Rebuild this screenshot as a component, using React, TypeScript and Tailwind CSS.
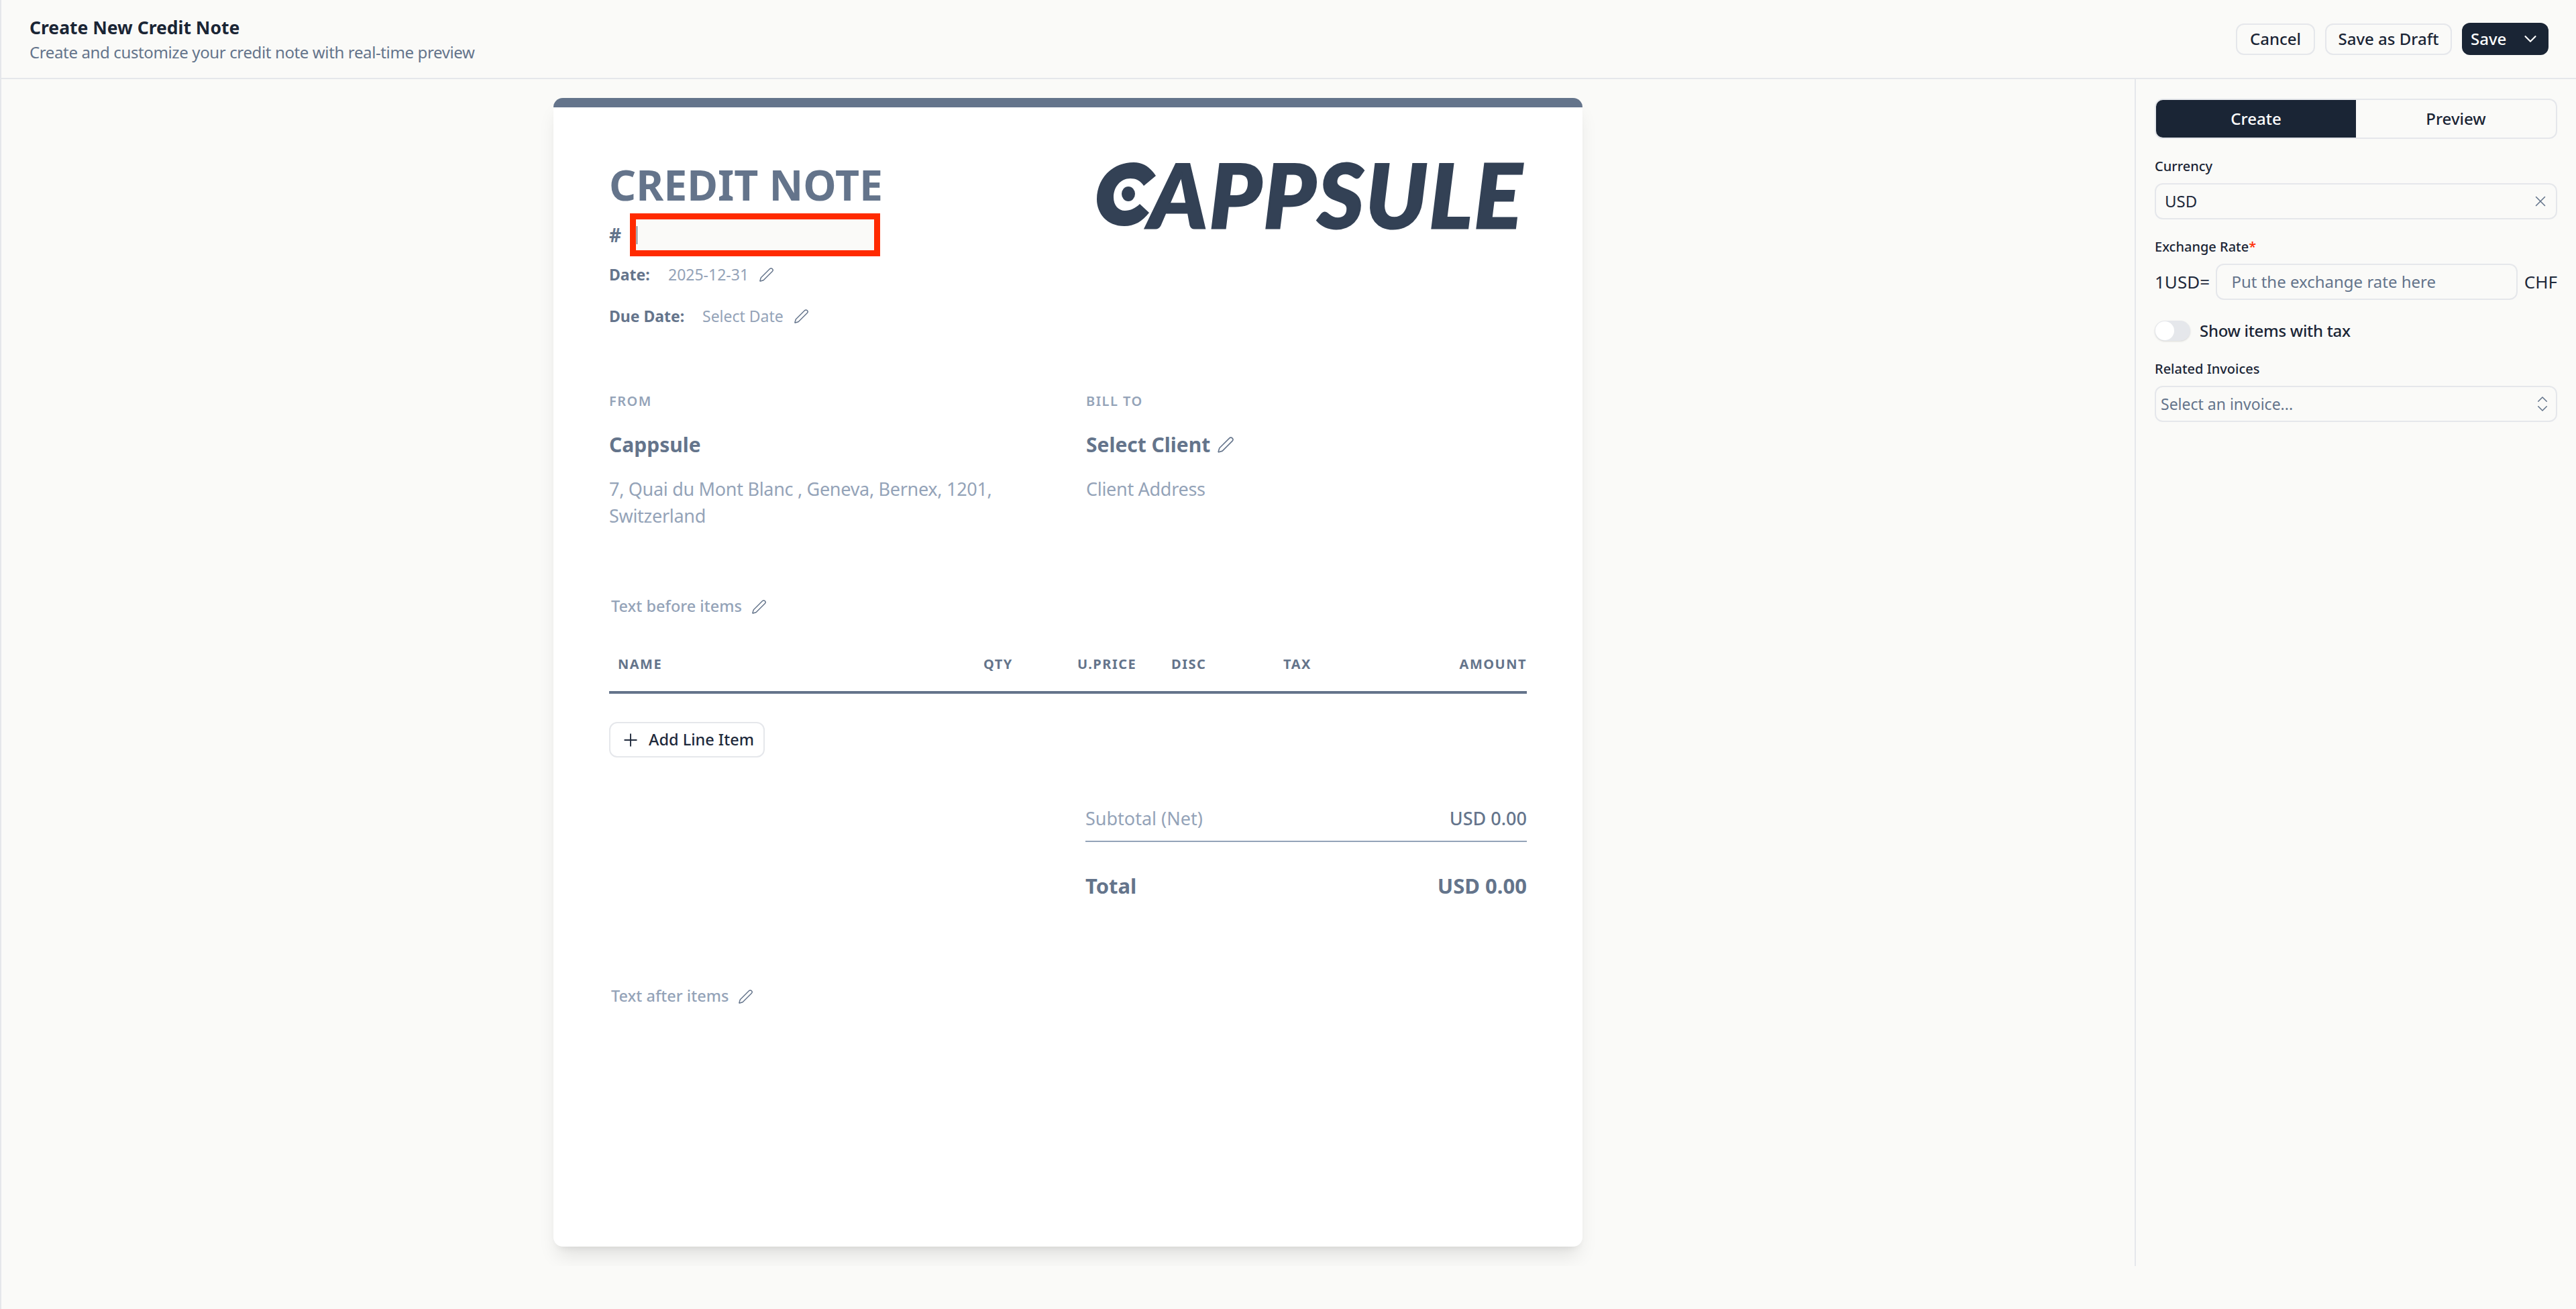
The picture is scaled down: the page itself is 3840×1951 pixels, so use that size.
import { ChevronDown, ChevronsUpDown, Pen, Plus, X } from 'lucide-react'

const font = { fontFamily: '"Noto Sans", "Open Sans", sans-serif' }

function EditIcon({ className = 'w-[23px] h-[23px]' }: { className?: string }) {
  return <Pen className={`text-[#64748b] shrink-0 ${className}`} strokeWidth={1.5} />
}

function CappsuleLogo() {
  return (
    <div className="flex items-center w-[641px] h-[95px] text-[#334155]">
      <svg viewBox="0 0 88 95" className="w-[88px] h-[95px] shrink-0" fill="currentColor">
        <path d="M55 0C70 0 80 8 88 20L70 35C65 27 58 24 50 24C35 24 25 37 25 52C25 64 32 72 42 72C50 72 58 68 64 62L78 75C68 88 56 95 41 95C15 95 0 76 0 55C0 25 22 0 55 0Z" />
        <ellipse cx="47" cy="47" rx="10" ry="11" />
      </svg>
      <span
        className="-ml-[10px] italic font-black text-[132px] leading-[95px] tracking-[3px] whitespace-nowrap [-webkit-text-stroke:3px_#334155]"
        style={{ fontFamily: 'Lato, sans-serif' }}
      >
        APPSULE
      </span>
    </div>
  )
}

function Invoice() {
  return (
    <div className="w-[1534px] h-[1712px] shrink-0 bg-white rounded-[14px] border-t-[14px] border-[#64748b] shadow-[0_19px_29px_-6px_rgba(0,0,0,0.1),0_8px_12px_-8px_rgba(0,0,0,0.1)] px-[83px]">
      <div className="flex justify-between pt-[83px]">
        <div>
          <h1 className="text-[62.5px] leading-[64px] font-bold text-[#64748b]">CREDIT NOTE</h1>
          <div className="flex items-center mt-[11px] h-[64px]">
            <span className="text-[28px] font-bold text-[#64748b] w-[31px]">#</span>
            <div className="w-[373px] h-[64px] border-[9px] border-[#ff2a00] bg-[#fafaf8] flex items-center pl-[1px]">
              <div className="w-[1px] h-[27px] bg-[#334155]" />
            </div>
          </div>
          <div className="flex items-center mt-[14px] h-[26px] text-[23px]">
            <span className="font-bold text-[#64748b] w-[88px]">Date:</span>
            <span className="text-[#94a3b8]">2025-12-31</span>
            <EditIcon className="ml-[15px] w-[23px] h-[23px]" />
          </div>
          <div className="flex items-center mt-[36px] h-[26px] text-[23px]">
            <span className="font-bold text-[#64748b] w-[139px]">Due Date:</span>
            <span className="text-[#94a3b8]">Select Date</span>
            <EditIcon className="ml-[15px] w-[23px] h-[23px]" />
          </div>
        </div>
        <div className="-mt-[1px]">
          <CappsuleLogo />
        </div>
      </div>

      <div className="grid grid-cols-[711px_1fr] mt-[102px]">
        <div>
          <div className="text-[20px] leading-[24px] font-semibold tracking-[1.5px] text-[#94a3b8]">FROM</div>
          <div className="text-[30px] leading-[40px] font-bold text-[#64748b] mt-[33px]">Cappsule</div>
          <div className="text-[27px] leading-[40px] tracking-[-0.3px] text-[#94a3b8] mt-[26px] w-[600px]">7, Quai du Mont Blanc , Geneva, Bernex, 1201, Switzerland</div>
        </div>
        <div>
          <div className="text-[20px] leading-[24px] font-semibold tracking-[1.5px] text-[#94a3b8]">BILL TO</div>
          <div className="flex items-center mt-[33px] h-[40px]">
            <span className="text-[30px] leading-[40px] font-bold text-[#64748b]">Select Client</span>
            <EditIcon className="ml-[10px] w-[26px] h-[26px]" />
          </div>
          <div className="text-[27px] leading-[40px] tracking-[-0.3px] text-[#94a3b8] mt-[26px]">Client Address</div>
        </div>
      </div>

      <div className="flex items-center mt-[101px] pl-[3px] h-[28px] text-[23.5px] font-medium text-[#94a3b8]">
        <span>Text before items</span>
        <EditIcon className="ml-[14px] w-[23px] h-[23px]" />
      </div>

      <div className="grid grid-cols-[545px_140px_140px_167px_1fr] items-center h-[101px] mt-[15px] border-b-[4px] border-[#64748b] pl-[13px] pt-[16px] text-[20px] font-bold tracking-[1.5px] text-[#64748b]">
        <div>NAME</div>
        <div>QTY</div>
        <div>U.PRICE</div>
        <div>DISC</div>
        <div className="flex justify-between"><span>TAX</span><span>AMOUNT</span></div>
      </div>

      <button className="flex items-center h-[53px] mt-[42px] w-[232px] pl-[15px] gap-[12px] rounded-[12px] border-2 border-[#e5e7eb] text-[23.5px] font-medium text-[#1e293b]">
        <Plus className="w-[30px] h-[30px]" strokeWidth={1.5} />
        Add Line Item
      </button>

      <div className="ml-[710px] mt-[71px]">
        <div className="flex justify-between items-center h-[40px] text-[27px]">
          <span className="text-[#94a3b8]">Subtotal (Net)</span>
          <span className="font-medium text-[#64748b]">USD 0.00</span>
        </div>
        <div className="h-[2px] bg-[#94a3b8] mt-[13px]" />
        <div className="flex justify-between items-center h-[40px] mt-[45px] text-[31px] font-bold text-[#64748b]">
          <span>Total</span>
          <span>USD 0.00</span>
        </div>
      </div>

      <div className="flex items-center mt-[131px] pl-[3px] h-[28px] text-[23.5px] font-medium text-[#94a3b8]">
        <span>Text after items</span>
        <EditIcon className="ml-[14px] w-[23px] h-[23px]" />
      </div>
    </div>
  )
}

function Sidebar() {
  return (
    <aside className="w-[658px] shrink-0 border-l-2 border-[#e5e7eb] pt-[29px] pl-[28px] pr-[28px]">
      <div className="grid grid-cols-2 h-[60px] rounded-[12px] border-2 border-[#e5e7eb] overflow-hidden text-[24px] font-medium">
        <div className="bg-[#1a2535] text-white flex items-center justify-center">Create</div>
        <div className="text-[#1a2535] flex items-center justify-center">Preview</div>
      </div>

      <label className="block mt-[28px] text-[20px] leading-[26px] font-medium text-[#1a2535]">Currency</label>
      <div className="flex items-center justify-between h-[54px] mt-[12px] pl-[13px] pr-[10px] rounded-[12px] border-2 border-[#e5e7eb] text-[24px] text-[#1e293b]">
        <span>USD</span>
        <X className="w-[26px] h-[26px] text-[#64748b]" strokeWidth={1.4} />
      </div>

      <label className="block mt-[28px] text-[20px] leading-[26px] font-medium text-[#1a2535]">
        Exchange Rate<span className="text-[#ff2a00]">*</span>
      </label>
      <div className="flex items-center justify-between mt-[12px] text-[26px] text-[#1e293b]">
        <span>1USD=</span>
        <div className="w-[450px] h-[54px] flex items-center pl-[21px] rounded-[12px] border-2 border-[#e5e7eb] text-[24px] text-[#64748b]">
          Put the exchange rate here
        </div>
        <span>CHF</span>
      </div>

      <div className="flex items-center gap-[14px] mt-[28px]">
        <div className="w-[53px] h-[30px] rounded-full bg-[#e5e7eb] shadow-sm p-[1px]">
          <div className="w-[28px] h-[28px] rounded-full bg-white" />
        </div>
        <span className="text-[24px] tracking-[-0.3px] font-medium text-[#1a2535]">Show items with tax</span>
      </div>

      <label className="block mt-[26px] text-[20px] leading-[26px] font-medium text-[#1a2535]">Related Invoices</label>
      <div className="flex items-center justify-between h-[54px] mt-[12px] pl-[7px] pr-[5px] rounded-[12px] border-2 border-[#e5e7eb] text-[23px] text-[#64748b]">
        <span>Select an invoice...</span>
        <ChevronsUpDown className="w-[30px] h-[30px]" strokeWidth={1.25} />
      </div>
    </aside>
  )
}

export default function App() {
  return (
    <div className="w-[3840px] h-[1951px] bg-[#fafaf8] border-l-2 border-[#e5e7eb] overflow-hidden" style={font}>
      <header className="h-[118px] border-b-2 border-[#e5e7eb] flex items-center justify-between pl-[42px] pr-[41px]">
        <div className="pt-[2px]">
          <div className="text-[26.5px] leading-[36px] font-bold text-[#1a2535]">Create New Credit Note</div>
          <div className="text-[24px] leading-[36px] tracking-[-0.37px] text-[#64748b] mt-[1px]">Create and customize your credit note with real-time preview</div>
        </div>
        <div className="flex items-center gap-[15px] text-[24px] font-medium text-[#1a2535]">
          <button className="w-[118px] h-[47px] rounded-[12px] border-2 border-[#e5e7eb] flex items-center justify-center">Cancel</button>
          <button className="w-[189px] h-[47px] rounded-[12px] border-2 border-[#e5e7eb] flex items-center justify-center">Save as Draft</button>
          <button className="w-[129px] h-[48px] rounded-[12px] bg-[#1a2535] text-white flex items-center justify-between pl-[13px] pr-[12px]">
            Save
            <ChevronDown className="w-[30px] h-[30px]" strokeWidth={1.75} />
          </button>
        </div>
      </header>
      <div className="flex h-[1769px] overflow-hidden">
        <main className="flex-1 flex justify-center pt-[28px]">
          <Invoice />
        </main>
        <Sidebar />
      </div>
    </div>
  )
}
